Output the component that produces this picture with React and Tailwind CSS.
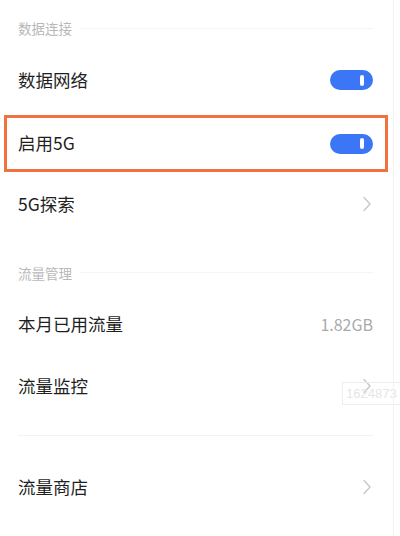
import React from "react";

const font = { fontFamily: '"Noto Sans CJK SC", "Noto Sans", sans-serif' };

function Toggle() {
  return (
    <div className="w-[43px] h-[20px] rounded-full bg-[#3b76f6] flex items-center justify-end pr-[9px]">
      <div className="w-[4px] h-[11px] rounded-full bg-white" />
    </div>
  );
}

function Chevron() {
  return (
    <svg width="10" height="16" viewBox="0 0 10 16" className="mr-[1px]">
      <path d="M2 1.5 L8 8 L2 14.5" fill="none" stroke="#c8c8c8" strokeWidth="1.4" strokeLinecap="round" strokeLinejoin="round" />
    </svg>
  );
}

function SectionHeader({ title, className }) {
  return (
    <div className={`flex items-center pl-[18px] pr-[27px] ${className}`}>
      <span className="text-[13.5px] leading-[20px] text-[#b8b8b8]">{title}</span>
      <div className="flex-1 h-px bg-[#f4f4f4] ml-[8px]" />
    </div>
  );
}

function Row({ label, right }) {
  return (
    <div className="h-[62px] flex items-center justify-between pl-[18px] pr-[27px]">
      <span className="text-[17.5px] text-[#1f1f1f]">{label}</span>
      {right}
    </div>
  );
}

export default function App() {
  return (
    <div className="relative w-[400px] h-[536px] bg-white overflow-hidden" style={font}>
      <SectionHeader title="数据连接" className="h-[49px] pt-[7px]" />
      <Row label="数据网络" right={<Toggle />} />

      {/* highlighted row */}
      <div className="h-[62px] pt-[4px] pb-[1px] pl-[4px] pr-[12px]">
        <div className="h-full border-[3px] border-[#f3703f] flex items-center justify-between pl-[11px] pr-[12px]">
          <span className="text-[17.5px] text-[#1f1f1f]">启用5G</span>
          <Toggle />
        </div>
      </div>

      <Row label="5G探索" right={<Chevron />} />

      <SectionHeader title="流量管理" className="h-[58px] pt-[17px]" />
      <Row label="本月已用流量" right={<span className="text-[16px] text-[#aaaaaa]">1.82GB</span>} />
      <Row label="流量监控" right={<Chevron />} />

      <div className="mt-[18px] ml-[18px] mr-[27px] h-px bg-[#f2f2f2]" />

      <div className="mt-[20px]">
        <Row label="流量商店" right={<Chevron />} />
      </div>

      {/* watermark box */}
      <div className="absolute left-[342px] top-[382px] w-[70px] h-[23px] border border-[#eeeeee] flex items-center pl-[3px]">
        <span className="text-[13px] text-[#e6e6e6]" style={{ fontFamily: '"Liberation Sans", sans-serif' }}>1624873</span>
      </div>
      <div className="absolute left-[393px] top-0 w-px h-full bg-[#f3f3f3]" />
    </div>
  );
}
